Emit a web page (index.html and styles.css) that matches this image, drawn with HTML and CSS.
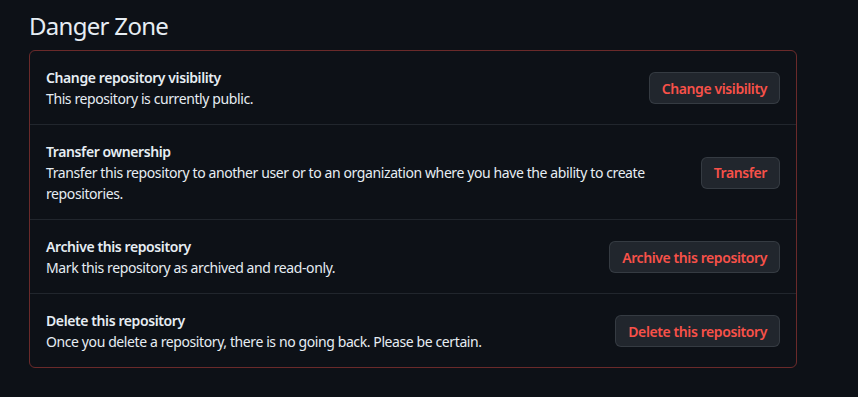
FILE: index.html
```html
<!DOCTYPE html>
<html lang="en">
<head>
    <meta charset="UTF-8">
    <title>Danger Zone</title>
    <link rel="stylesheet" href="styles.css">
</head>
<body>
    <div class="page">
        <h2 class="subhead">Danger Zone</h2>

        <div class="danger-box">
            <div class="danger-row">
                <div class="row-text">
                    <strong>Change repository visibility</strong>
                    <p>This repository is currently public.</p>
                </div>
                <button class="btn-danger">Change visibility</button>
            </div>

            <div class="danger-row">
                <div class="row-text">
                    <strong>Transfer ownership</strong>
                    <p>Transfer this repository to another user or to an organization where you have the ability to create repositories.</p>
                </div>
                <button class="btn-danger">Transfer</button>
            </div>

            <div class="danger-row">
                <div class="row-text">
                    <strong>Archive this repository</strong>
                    <p>Mark this repository as archived and read-only.</p>
                </div>
                <button class="btn-danger">Archive this repository</button>
            </div>

            <div class="danger-row">
                <div class="row-text">
                    <strong>Delete this repository</strong>
                    <p>Once you delete a repository, there is no going back. Please be certain.</p>
                </div>
                <button class="btn-danger">Delete this repository</button>
            </div>
        </div>
    </div>
</body>
</html>
```

FILE: styles.css
```css
/* Page */
body {
    margin: 0;
    background-color: #0d1117;
    color: #e6edf3;
    font-family: 'Noto Sans', sans-serif;
    font-size: 14px;
    line-height: 21px;
    letter-spacing: -0.4px;
}

.page {
    padding: 8px 0 0 29px;
    width: 768px;
}

/* Heading */
.subhead {
    font-size: 24px;
    font-weight: 400;
    line-height: 36px;
    letter-spacing: -0.7px;
    margin: 0 0 6px;
}

/* Danger box */
.danger-box {
    border: 1px solid rgba(248, 81, 73, 0.4);
    border-radius: 6px;
}

.danger-row {
    display: flex;
    align-items: center;
    justify-content: space-between;
    gap: 16px;
    padding: 16px 16px 15px;
    border-top: 1px solid #21262d;
}

.danger-row:first-child {
    border-top: none;
}

.row-text strong {
    display: block;
    font-weight: 600;
}

.row-text p {
    margin: 0;
}

/* Buttons */
.btn-danger {
    flex-shrink: 0;
    height: 32px;
    padding: 0 12px;
    font-family: inherit;
    font-size: 14px;
    font-weight: 600;
    letter-spacing: -0.4px;
    color: #f85149;
    background-color: #21262d;
    border: 1px solid rgba(240, 246, 252, 0.1);
    border-radius: 6px;
    cursor: pointer;
}
```
